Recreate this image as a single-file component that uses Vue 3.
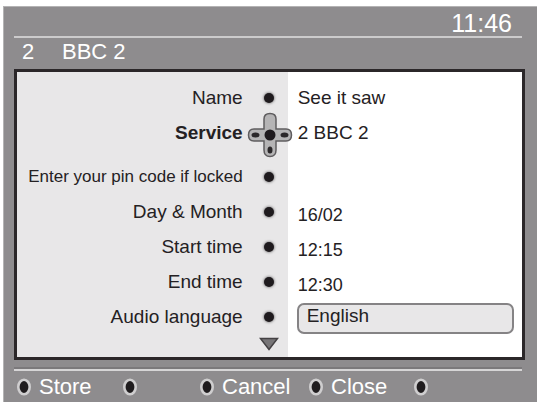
<script setup>
import { ref } from 'vue';

const clock = ref('11:46');
const channel = ref({ number: '2', name: 'BBC 2' });
const selected = ref('service');
const language = ref('English');

const rows = [
    { id: 'name', label: 'Name', value: 'See it saw' },
    { id: 'service', label: 'Service', value: '2 BBC 2' },
    { id: 'pin', label: 'Enter your pin code if locked', value: '', small: true, spaced: true },
    { id: 'date', label: 'Day & Month', value: '16/02', low: true },
    { id: 'start', label: 'Start time', value: '12:15', low: true },
    { id: 'end', label: 'End time', value: '12:30', low: true },
    { id: 'language', label: 'Audio language', options: ['English'] },
];

const actions = [
    { id: 'red', text: 'Store' },
    { id: 'green', text: '' },
    { id: 'yellow', text: 'Cancel' },
    { id: 'blue', text: 'Close' },
    { id: 'white', text: '' },
];
</script>

<template>
<main class="screen">
    <header>
        <div class="clock">{{ clock }}</div>
        <div class="channel">
            <span class="number">{{ channel.number }}</span>
            <span>{{ channel.name }}</span>
        </div>
    </header>

    <section class="panel">
        <div
        v-for="row in rows"
        :key="row.id"
        class="row"
        :class="{ spaced: row.spaced, selected: row.id === selected }"
        >
            <div class="left">
                <label v-if="row.options" :for="row.id" class="label">{{ row.label }}</label>
                <span v-else class="label" :class="{ small: row.small }">{{ row.label }}</span>
                <span class="marker">
                    <svg v-if="row.id === selected" class="pad" width="46" height="46" viewBox="0 0 46 46">
                        <path
                        d="M17 17V7Q17 1.500 23 1.500Q29 1.500 29 7V17H39Q44.500 17 44.500 23Q44.500 29 39 29H29V38Q29 44.500 23 44.500Q17 44.500 17 38V29H7Q1.500 29 1.500 23Q1.500 17 7 17Z"
                        fill="#b5b4b5"
                        stroke="#5f5d5f"
                        stroke-width="1.500"
                        />
                        <ellipse cx="8.500" cy="23" rx="4" ry="2.500" fill="#2b282a" />
                        <ellipse cx="37.500" cy="23" rx="4" ry="2.500" fill="#2b282a" />
                        <ellipse cx="23" cy="38" rx="2.500" ry="3.500" fill="#2b282a" />
                        <circle cx="23" cy="23" r="5.500" fill="#1f1b1e" />
                    </svg>
                    <span v-else class="dot"></span>
                </span>
            </div>
            <div class="right">
                <select v-if="row.options" :id="row.id" v-model="language">
                    <option v-for="option in row.options" :key="option">{{ option }}</option>
                </select>
                <span v-else class="value" :class="{ low: row.low }">{{ row.value }}</span>
            </div>
        </div>
        <div class="more">
            <button type="button" aria-label="More">
                <svg width="20" height="14" viewBox="0 0 20 14">
                    <path d="M1.500 1.500H18.500L10 12.500Z" fill="#777577" stroke="#444143" stroke-width="1.500" />
                </svg>
            </button>
        </div>
    </section>

    <footer>
        <button v-for="action in actions" :key="action.id" type="button" :aria-label="action.text || action.id">
            <svg width="14" height="18" viewBox="0 0 14 18">
                <ellipse cx="7" cy="9" rx="5.700" ry="7.200" fill="#1f1c1e" stroke="#cfcecf" stroke-width="2.600" />
            </svg>
            <span v-if="action.text">{{ action.text }}</span>
        </button>
    </footer>
</main>
</template>

<style>
body{
    margin: 0;
    background: #fff;
}
</style>

<style scoped>
.screen{
    --left: calc(54% - 2px);
    box-sizing: border-box;
    margin: 6px 0 0 3px;
    padding: 0 12px 0 10px;
    border-top: 1px solid #b4b3b4;
    border-left: 1px solid #b4b3b4;
    background: #8e8c8e;
    color: #fff;
    font-family: "Liberation Sans", Arial, sans-serif;
}

.clock{
    margin-right: 3px;
    padding: 3px 10px 0 0;
    border-bottom: 2px solid #cccbcc;
    font-size: 25px;
    line-height: 26px;
    text-align: right;
}

.channel{
    display: flex;
    padding: 1px 8px 4px;
    font-size: 22px;
    line-height: 26px;
}

.number{
    width: 40px;
}

.panel{
    padding-top: 8px;
    border: 3px solid #2b2729;
    background: linear-gradient(to right, #e8e7e8 var(--left), #fff var(--left));
    color: #242123;
    font-size: 19px;
}

.row{
    display: grid;
    grid-template-columns: var(--left) 1fr;
    height: 35px;
}

.spaced{
    margin-top: 9px;
}

.left,
.more{
    display: flex;
    align-items: center;
    justify-content: flex-end;
    padding-right: 12px;
}

.left{
    white-space: nowrap;
}

.small{
    font-size: 17px;
}

.selected .label{
    font-weight: bold;
}

.marker{
    position: relative;
    display: flex;
    flex-shrink: 0;
    align-items: center;
    justify-content: center;
    width: 14px;
    height: 14px;
    margin-left: 19px;
}

.dot{
    width: 10px;
    height: 10px;
    border-radius: 50%;
    background: #1f1b1e;
    box-shadow: 0 0 3px #444;
}

.pad{
    position: absolute;
    top: -14px;
    left: -15px;
}

.right{
    display: flex;
    align-items: center;
    padding: 0 8px 0 9px;
}

.value{
    padding-left: 1px;
    font-size: 19px;
}

.low{
    padding-top: 7px;
    font-size: 18px;
}

select{
    width: 100%;
    height: 31px;
    margin-top: 3px;
    padding: 0 8px 6px;
    border: 2px solid #858385;
    border-radius: 7px;
    background: #e8e7e8;
    color: #242123;
    font: inherit;
    appearance: none;
}

.more{
    width: var(--left);
    height: 23px;
    box-sizing: border-box;
    padding-right: 9px;
    align-items: flex-start;
}

button{
    display: flex;
    align-items: center;
    gap: 8px;
    padding: 0;
    border: none;
    background: none;
    color: inherit;
    font: inherit;
    cursor: pointer;
}

.more button{
    padding-top: 3px;
}

footer{
    display: grid;
    grid-template-columns: 106fr 77fr 109fr 105fr 108fr;
    margin: 9px 3px 0 0;
    padding-left: 3px;
    border-top: 2px solid #d6d5d6;
    box-shadow: 0 -2px 0 #7b797b;
    font-size: 22px;
    line-height: 31px;
}

footer button{
    height: 31px;
}
</style>
